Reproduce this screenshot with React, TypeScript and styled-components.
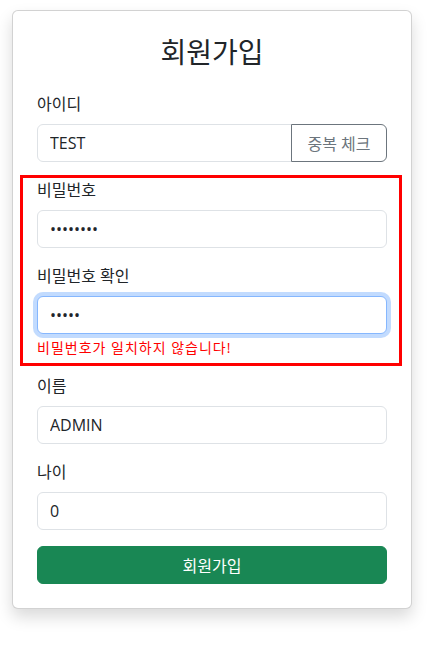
import styled, { createGlobalStyle } from "styled-components";

const GlobalStyle = createGlobalStyle`
  html, body {
    margin: 0;
    padding: 0;
    background: #fff;
  }
  body {
    font-family: "Open Sans", "Noto Sans CJK KR", sans-serif;
    color: #212529;
    font-size: 16px;
  }
  * {
    box-sizing: border-box;
  }
`;

const Page = styled.div`
  width: 430px;
  height: 650px;
  padding: 10px 0 0 12px;
`;

const Card = styled.form`
  width: 400px;
  background: #fff;
  border: 1px solid rgba(0, 0, 0, 0.175);
  border-radius: 6px;
  box-shadow: 0 8px 16px rgba(0, 0, 0, 0.15);
  padding: 24px;
`;

const Title = styled.h1`
  margin: 0 0 23px;
  font-size: 28px;
  font-weight: 400;
  line-height: 34px;
  text-align: center;
`;

const Field = styled.div<{ $last?: boolean }>`
  margin-bottom: ${(p) => (p.$last ? "0" : "16px")};
`;

const Label = styled.label`
  display: block;
  margin-bottom: 8px;
  line-height: 24px;
  height: 24px;
`;

const Input = styled.input<{ $focused?: boolean }>`
  display: block;
  width: 100%;
  height: 38px;
  padding: 6px 12px;
  font-family: inherit;
  font-size: 16px;
  line-height: 24px;
  color: #212529;
  background: #fff;
  border: 1px solid ${(p) => (p.$focused ? "#86b7fe" : "#dee2e6")};
  border-radius: 6px;
  outline: 0;
  caret-color: #000;
  box-shadow: ${(p) =>
    p.$focused ? "0 0 0 4px rgba(13, 110, 253, 0.25)" : "none"};
  &:focus {
    border-color: #86b7fe;
    box-shadow: 0 0 0 4px rgba(13, 110, 253, 0.25);
  }
`;

const InputGroup = styled.div`
  display: flex;
  ${Input} {
    flex: 1;
    min-width: 0;
    border-top-right-radius: 0;
    border-bottom-right-radius: 0;
  }
`;

const OutlineButton = styled.button`
  width: 96px;
  height: 38px;
  margin-left: -1px;
  padding: 6px 12px;
  font-family: inherit;
  font-size: 16px;
  color: #6c757d;
  background: #fff;
  border: 1px solid #6c757d;
  border-radius: 0 6px 6px 0;
  white-space: nowrap;
`;

const Highlight = styled.div`
  margin: -3px -15px 8px -17px;
  padding: 0 12px 5px 14px;
  border: 3px solid red;
`;

const ErrorText = styled.div`
  margin-top: 3px;
  font-size: 14px;
  line-height: 21px;
  letter-spacing: 1px;
  color: red;
`;

const SubmitButton = styled.button`
  display: block;
  width: 100%;
  height: 38px;
  font-family: inherit;
  font-size: 16px;
  color: #fff;
  background: #198754;
  border: 1px solid #198754;
  border-radius: 6px;
`;

export default function App() {
  return (
    <Page>
      <GlobalStyle />
      <Card onSubmit={(e) => e.preventDefault()}>
        <Title>회원가입</Title>
        <Field>
          <Label>아이디</Label>
          <InputGroup>
            <Input defaultValue="TEST" />
            <OutlineButton type="button">중복 체크</OutlineButton>
          </InputGroup>
        </Field>
        <Highlight>
          <Field>
            <Label>비밀번호</Label>
            <Input type="password" defaultValue="12345678" />
          </Field>
          <Field $last>
            <Label>비밀번호 확인</Label>
            <Input type="password" defaultValue="12345" $focused autoFocus />
            <ErrorText>비밀번호가 일치하지 않습니다!</ErrorText>
          </Field>
        </Highlight>
        <Field>
          <Label>이름</Label>
          <Input defaultValue="ADMIN" />
        </Field>
        <Field>
          <Label>나이</Label>
          <Input type="number" defaultValue={0} />
        </Field>
        <SubmitButton type="submit">회원가입</SubmitButton>
      </Card>
    </Page>
  );
}
